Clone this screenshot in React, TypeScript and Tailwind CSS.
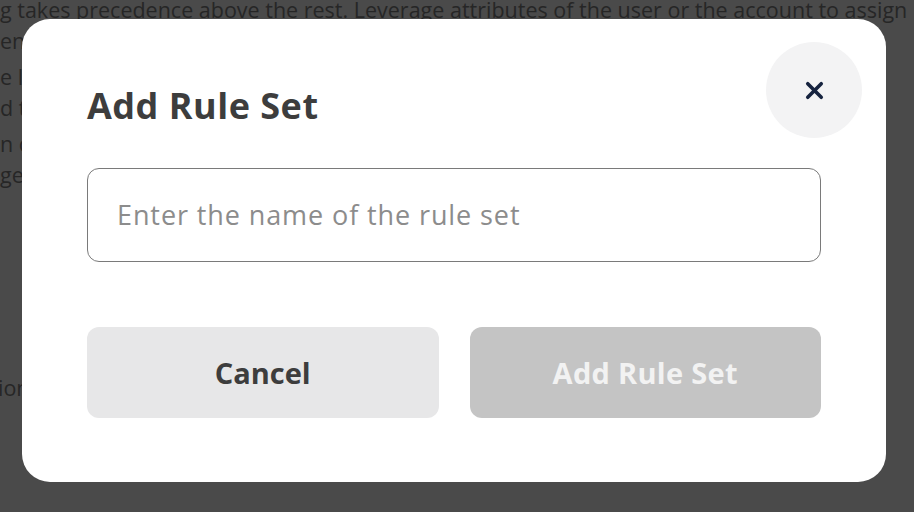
import React from 'react';
import { X } from 'lucide-react';

const bgLines = [
  { text: 'g takes precedence above the rest. Leverage attributes of the user or the account to assign', gap: false },
  { text: 'ent', gap: false },
  { text: 'e levels are evaluated in order from top to bottom and the first match is applied based', gap: true },
  { text: 'd the rule set is then used to determine the experience of every user in the', gap: false },
  { text: 'n of the rule set can be changed at any time and it applies to every destination', gap: true },
  { text: 'ge the order of the rules with drag and drop to control which one is shown', gap: false },
];

const App: React.FC = () => {
  return (
    <div className="relative w-[914px] h-[512px] overflow-hidden bg-[#4a4a4a] font-['Open_Sans',sans-serif]">
      {/* page behind the overlay */}
      <div className="text-[21.5px] leading-[31px] text-[#262626] -mt-[6px]">
        {bgLines.map((line, i) => (
          <div key={i} className={`whitespace-nowrap ${line.gap ? 'mt-[5px]' : ''}`}>
            {line.text}
          </div>
        ))}
        <div className="mt-[182px] whitespace-nowrap -ml-[2px]">ion</div>
      </div>

      {/* dialog */}
      <div className="absolute left-[22px] top-[19px] w-[864px] h-[463px] rounded-[28px] bg-white px-[65px] pt-[66px]">
        <button className="absolute right-[24px] top-[23px] w-[96px] h-[96px] rounded-full bg-[#f3f3f4] flex items-center justify-center text-[#16233f]">
          <X size={27} strokeWidth={3.2} />
        </button>
        <h2 className="text-[36px] leading-[42px] font-bold tracking-[0.5px] text-[#3d3d3d]">Add Rule Set</h2>
        <div className="mt-[41px] h-[94px] rounded-[12px] border-[1.5px] border-[#7a7a7a] flex items-center px-[29px]">
          <input
            className="w-full bg-transparent outline-none text-[27px] tracking-[0.9px] text-[#3d3d3d] placeholder:text-[#8c8c8c]"
            placeholder="Enter the name of the rule set"
          />
        </div>
        <div className="mt-[65px] grid grid-cols-2 gap-[31px]">
          <button className="h-[91px] rounded-[12px] bg-[#e7e7e8] text-[29px] font-bold text-[#3d3d3d]">Cancel</button>
          <button className="h-[91px] rounded-[12px] bg-[#c4c4c4] text-[29px] font-bold tracking-[0.3px] text-[#f2f2f2]">Add Rule Set</button>
        </div>
      </div>
    </div>
  );
};

export default App;
